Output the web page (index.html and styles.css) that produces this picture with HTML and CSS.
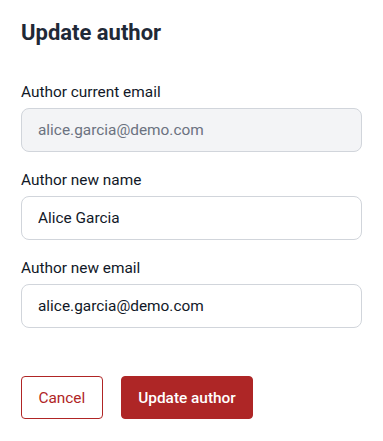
FILE: index.html
```html
<!DOCTYPE html>
<html lang="en">
<head>
<meta charset="utf-8">
<title>Update author</title>
<link rel="stylesheet" href="styles.css">
</head>
<body>
<form class="panel">
  <h1 class="title">Update author</h1>
  <div class="fields">
    <div class="field">
      <label class="label" for="cur">Author current email</label>
      <input class="input input-disabled" id="cur" type="text" value="alice.garcia@demo.com" disabled>
    </div>
    <div class="field">
      <label class="label" for="name">Author new name</label>
      <input class="input" id="name" type="text" value="Alice Garcia">
    </div>
    <div class="field">
      <label class="label" for="email">Author new email</label>
      <input class="input" id="email" type="text" value="alice.garcia@demo.com">
    </div>
  </div>
  <div class="actions">
    <button type="button" class="btn btn-outline">Cancel</button>
    <button type="button" class="btn btn-primary">Update author</button>
  </div>
</form>
</body>
</html>
```
FILE: styles.css
```css
* { box-sizing: border-box; }
html, body { margin: 0; background: #ffffff; }
body { font-family: Roboto, "Noto Sans", "Liberation Sans", sans-serif; color: #111827; }
.panel {
  padding: 18.5px 21px 20px 21px;
  width: 383px;
}
.title {
  margin: 0;
  font-size: 22px;
  line-height: 28px;
  font-weight: 700;
  color: #1f2937;
}
.fields {
  margin-top: 34px;
  display: flex;
  flex-direction: column;
  gap: 17px;
}
.field {
  display: flex;
  flex-direction: column;
  gap: 5.5px;
}
.label {
  font-size: 15.4px;
  line-height: 22px;
  color: #111827;
}
.input {
  width: 100%;
  height: 43.5px;
  border: 1px solid #d1d5db;
  border-radius: 8px;
  padding: 0 16px;
  font-family: inherit;
  font-size: 15.4px;
  color: #111827;
  background: #ffffff;
  outline: none;
}
.input-disabled {
  background: #f3f4f6;
  color: #6b7280;
}
.actions {
  margin-top: 48.3px;
  display: flex;
  gap: 18.3px;
}
.btn {
  height: 43.5px;
  border-radius: 4px;
  font-family: inherit;
  font-size: 15.4px;
  padding: 0;
  white-space: nowrap;
  cursor: pointer;
}
.btn-outline {
  background: #ffffff;
  border: 1px solid #b02525;
  color: #b02525;
  font-weight: 400;
  width: 81.7px;
}
.btn-primary {
  background: #ae2626;
  border: 1px solid #ae2626;
  color: #ffffff;
  font-weight: 500;
  width: 132px;
}
```
